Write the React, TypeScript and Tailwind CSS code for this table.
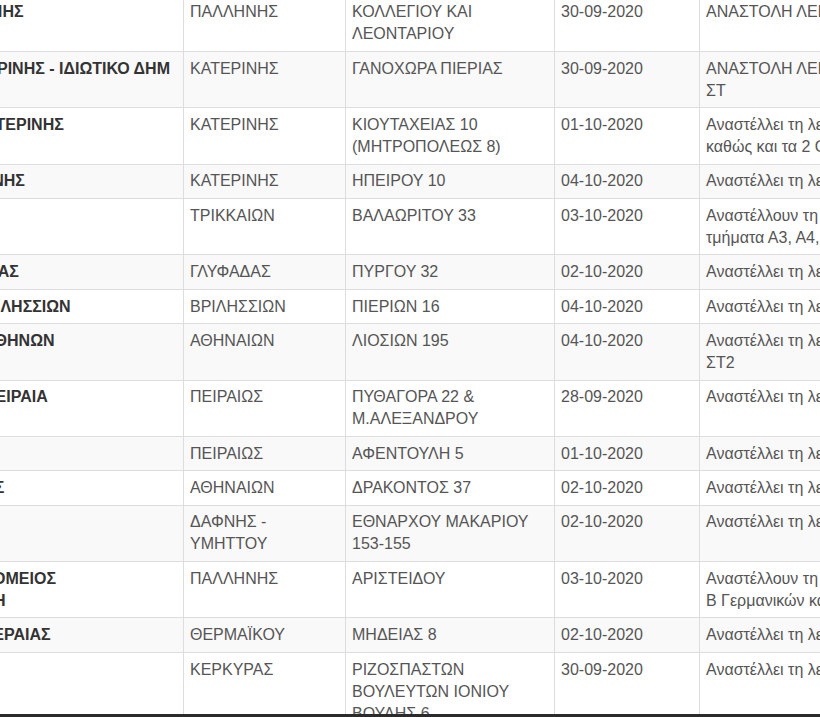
import type { ReactNode } from "react";

type Row = {
  school: ReactNode;
  municipality: ReactNode;
  address: ReactNode;
  date: string;
  notes: ReactNode;
};

const rows: Row[] = [
  {
    school: "ΓΕΝΙΚΟ ΛΥΚΕΙΟ ΠΑΛΛΗΝΗΣ",
    municipality: "ΠΑΛΛΗΝΗΣ",
    address: "ΚΟΛΛΕΓΙΟΥ ΚΑΙ ΛΕΟΝΤΑΡΙΟΥ",
    date: "30-09-2020",
    notes: "ΑΝΑΣΤΟΛΗ ΛΕΙΤΟΥΡΓΙΑΣ ΤΜΗΜΑΤΟΣ Γ1",
  },
  {
    school: "12ο ΝΗΠΙΑΓΩΓΕΙΟ ΚΑΤΕΡΙΝΗΣ - ΙΔΙΩΤΙΚΟ ΔΗΜ",
    municipality: "ΚΑΤΕΡΙΝΗΣ",
    address: "ΓΑΝΟΧΩΡΑ ΠΙΕΡΙΑΣ",
    date: "30-09-2020",
    notes: (
      <>
        ΑΝΑΣΤΟΛΗ ΛΕΙΤΟΥΡΓΙΑΣ ΤΜΗΜΑΤΟΣ
        <br />
        ΣΤ
      </>
    ),
  },
  {
    school: "ΔΗΜΟΤΙΚΟ ΣΧΟΛΕΙΟ ΚΑΤΕΡΙΝΗΣ",
    municipality: "ΚΑΤΕΡΙΝΗΣ",
    address: "ΚΙΟΥΤΑΧΕΙΑΣ 10 (ΜΗΤΡΟΠΟΛΕΩΣ 8)",
    date: "01-10-2020",
    notes: (
      <>
        Αναστέλλει τη λειτουργία του τμήματος Ε1
        <br />
        καθώς και τα 2 Ολοήμερα τμήματα
      </>
    ),
  },
  {
    school: "ΓΕΝΙΚΟ ΛΥΚΕΙΟ ΚΑΤΕΡΙΝΗΣ",
    municipality: "ΚΑΤΕΡΙΝΗΣ",
    address: "ΗΠΕΙΡΟΥ 10",
    date: "04-10-2020",
    notes: "Αναστέλλει τη λειτουργία του τμήματος Β2",
  },
  {
    school: "ΓΥΜΝΑΣΙΟ ΤΡΙΚΑΛΩΝ",
    municipality: "ΤΡΙΚΚΑΙΩΝ",
    address: "ΒΑΛΑΩΡΙΤΟΥ 33",
    date: "03-10-2020",
    notes: (
      <>
        Αναστέλλουν τη λειτουργία τους τα
        <br />
        τμήματα Α3, Α4, Α5 και Α6
      </>
    ),
  },
  {
    school: "ΓΕΝΙΚΟ ΛΥΚΕΙΟ ΓΛΥΦΑΔΑΣ",
    municipality: "ΓΛΥΦΑΔΑΣ",
    address: "ΠΥΡΓΟΥ 32",
    date: "02-10-2020",
    notes: "Αναστέλλει τη λειτουργία του τμήματος Α1",
  },
  {
    school: "ΔΗΜΟΤΙΚΟ ΣΧΟΛΕΙΟ ΒΡΙΛΗΣΣΙΩΝ",
    municipality: "ΒΡΙΛΗΣΣΙΩΝ",
    address: "ΠΙΕΡΙΩΝ 16",
    date: "04-10-2020",
    notes: "Αναστέλλει τη λειτουργία του τμήματος Δ1",
  },
  {
    school: "ΠΕΙΡΑΜΑΤΙΚΟ ΛΥΚΕΙΟ ΑΘΗΝΩΝ",
    municipality: "ΑΘΗΝΑΙΩΝ",
    address: "ΛΙΟΣΙΩΝ 195",
    date: "04-10-2020",
    notes: (
      <>
        Αναστέλλει τη λειτουργία του τμήματος
        <br />
        ΣΤ2
      </>
    ),
  },
  {
    school: "ΠΕΙΡΑΜΑΤΙΚΟ ΛΥΚΕΙΟ ΠΕΙΡΑΙΑ",
    municipality: "ΠΕΙΡΑΙΩΣ",
    address: "ΠΥΘΑΓΟΡΑ 22 & Μ.ΑΛΕΞΑΝΔΡΟΥ",
    date: "28-09-2020",
    notes: "Αναστέλλει τη λειτουργία του τμήματος Β3",
  },
  {
    school: "3ο ΓΥΜΝΑΣΙΟ ΠΕΙΡΑΙΑ",
    municipality: "ΠΕΙΡΑΙΩΣ",
    address: "ΑΦΕΝΤΟΥΛΗ 5",
    date: "01-10-2020",
    notes: "Αναστέλλει τη λειτουργία του τμήματος Γ2",
  },
  {
    school: "11ο ΓΥΜΝΑΣΙΟ ΚΥΨΕΛΗΣ",
    municipality: "ΑΘΗΝΑΙΩΝ",
    address: "ΔΡΑΚΟΝΤΟΣ 37",
    date: "02-10-2020",
    notes: "Αναστέλλει τη λειτουργία του τμήματος Α2",
  },
  {
    school: "ΓΥΜΝΑΣΙΟ ΥΜΗΤΤΟΥ",
    municipality: "ΔΑΦΝΗΣ - ΥΜΗΤΤΟΥ",
    address: "ΕΘΝΑΡΧΟΥ ΜΑΚΑΡΙΟΥ 153-155",
    date: "02-10-2020",
    notes: "Αναστέλλει τη λειτουργία του τμήματος Γ1",
  },
  {
    school: "ΙΔΙΩΤΙΚΟ ΓΥΜΝΑΣΙΟ ΠΡΟΜΕΙΟΣ ΔΙΑΠΟΛΙΤΙΣΜΙΚΗ ΓΛΩΣΣΗ",
    municipality: "ΠΑΛΛΗΝΗΣ",
    address: "ΑΡΙΣΤΕΙΔΟΥ",
    date: "03-10-2020",
    notes: (
      <>
        Αναστέλλουν τη λειτουργία τους τα τμήματα
        <br />
        Β Γερμανικών και Γ Γερμανικών
      </>
    ),
  },
  {
    school: "ΕΣΠΕΡΙΝΟ ΓΥΜΝΑΣΙΟ ΠΕΡΑΙΑΣ",
    municipality: "ΘΕΡΜΑΪΚΟΥ",
    address: "ΜΗΔΕΙΑΣ 8",
    date: "02-10-2020",
    notes: "Αναστέλλει τη λειτουργία του τμήματος Ε2",
  },
  {
    school: "ΓΥΜΝΑΣΙΟ ΚΕΡΚΥΡΑΣ",
    municipality: "ΚΕΡΚΥΡΑΣ",
    address: "ΡΙΖΟΣΠΑΣΤΩΝ ΒΟΥΛΕΥΤΩΝ ΙΟΝΙΟΥ ΒΟΥΛΗΣ 6",
    date: "30-09-2020",
    notes: "Αναστέλλει τη λειτουργία του τμήματος Β1",
  },
];

const cell =
  "border border-[#dddddd] px-[6px] py-[5.7px] align-top text-left leading-[22px]";

export default function App() {
  return (
    <div className="flex h-[717px] w-[820px] flex-col overflow-hidden bg-white font-['Liberation_Sans',Arial,sans-serif] text-[16px]">
      <div className="min-h-0 flex-1 overflow-hidden">
        {/* the screenshot is a crop: first and last columns run past the edges */}
        <table className="-mt-[5.4px] -ml-[199px] w-[1348px] table-fixed border-collapse">
          <colgroup>
            <col className="w-[382px]" />
            <col className="w-[162px]" />
            <col className="w-[209px]" />
            <col className="w-[145px]" />
            <col className="w-[450px]" />
          </colgroup>
          <tbody>
            {rows.map((row, i) => (
              <tr key={i} className={i % 2 === 1 ? "bg-[#f9f9f9]" : "bg-white"}>
                <td className={`${cell} font-bold text-[#333333]`}>{row.school}</td>
                <td className={`${cell} text-[#555555]`}>{row.municipality}</td>
                <td className={`${cell} text-[#555555]`}>{row.address}</td>
                <td className={`${cell} text-[#555555]`}>{row.date}</td>
                <td className={`${cell} text-[#555555]`}>{row.notes}</td>
              </tr>
            ))}
          </tbody>
        </table>
      </div>
      <div className="h-[3px] bg-[#2b2b2b]" />
    </div>
  );
}
